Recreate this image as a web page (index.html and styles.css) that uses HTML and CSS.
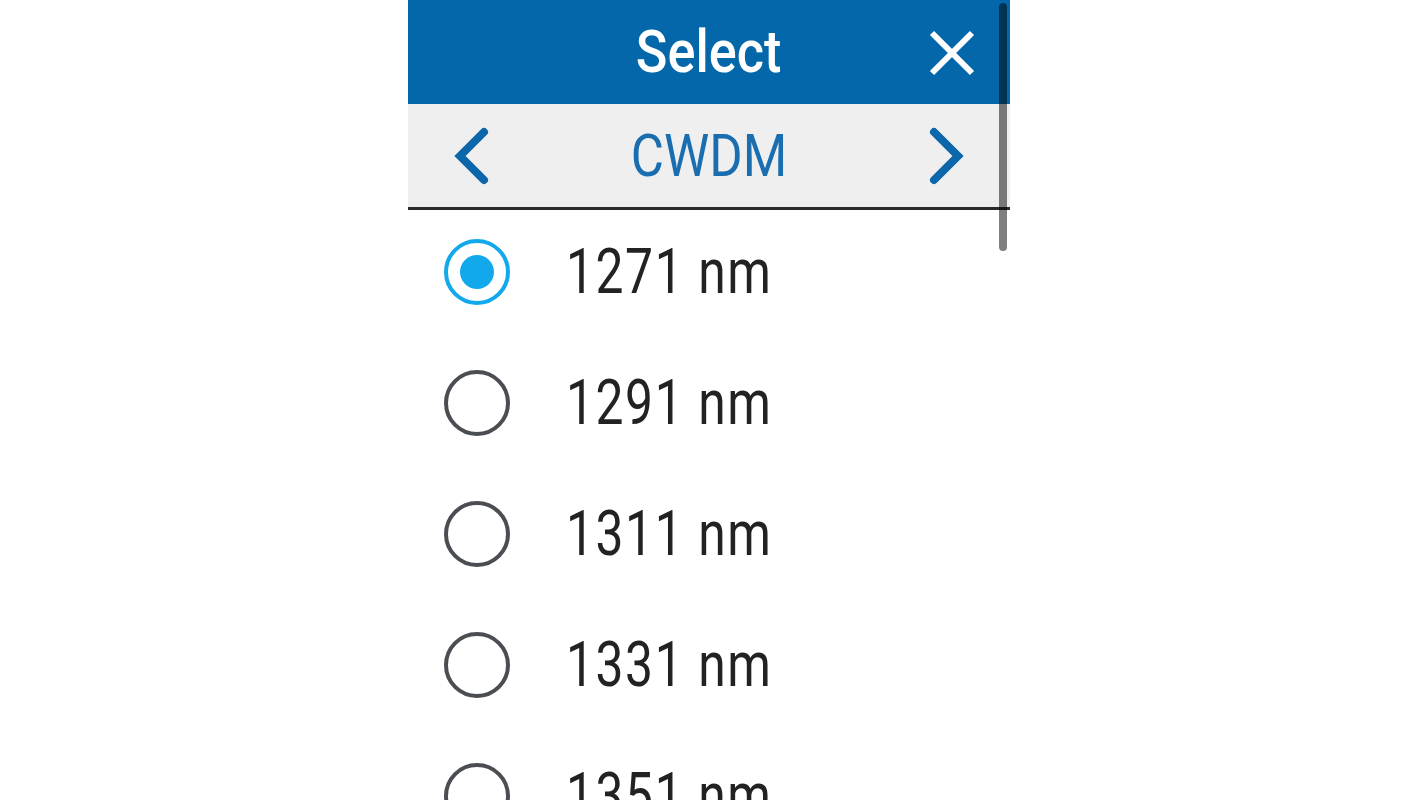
FILE: index.html
```html
<!DOCTYPE html>
<html lang="en">
<head>
<meta charset="utf-8">
<title>Select</title>
<link rel="stylesheet" href="styles.css">
</head>
<body>
<div class="panel">
  <header class="header">
    <span></span>
    <h1 class="title"><span class="squeeze">Select</span></h1>
    <button class="close" aria-label="Close">
      <svg width="48" height="48" viewBox="0 0 48 48"><path d="M4 4 L44 44 M44 4 L4 44" stroke="#fff" stroke-width="6" fill="none"/></svg>
    </button>
  </header>
  <nav class="nav">
    <button class="chev" aria-label="Previous">
      <svg width="38" height="58" viewBox="0 0 38 58"><path d="M32 5 L8 29 L32 53" stroke="#0b66aa" stroke-width="8" fill="none" stroke-linecap="round" stroke-linejoin="miter"/></svg>
    </button>
    <div class="group"><span class="squeeze">CWDM</span></div>
    <button class="chev" aria-label="Next">
      <svg width="38" height="58" viewBox="0 0 38 58"><path d="M6 5 L30 29 L6 53" stroke="#0b66aa" stroke-width="8" fill="none" stroke-linecap="round" stroke-linejoin="miter"/></svg>
    </button>
  </nav>
  <ul class="list">
    <li class="row"><span class="radio checked"></span><span class="label"><span class="squeeze">1271 nm</span></span></li>
    <li class="row"><span class="radio"></span><span class="label"><span class="squeeze">1291 nm</span></span></li>
    <li class="row"><span class="radio"></span><span class="label"><span class="squeeze">1311 nm</span></span></li>
    <li class="row"><span class="radio"></span><span class="label"><span class="squeeze">1331 nm</span></span></li>
    <li class="row"><span class="radio"></span><span class="label"><span class="squeeze">1351 nm</span></span></li>
  </ul>
  <div class="scrollbar"></div>
</div>
</body>
</html>
```
FILE: styles.css
```css
* { box-sizing: border-box; }
html, body { margin: 0; padding: 0; background: #fff; height: 800px; overflow: hidden; }
body { font-family: Roboto, "Noto Sans", sans-serif; }

.panel {
  position: relative;
  width: 602px;
  margin-left: 408px;
}

.header {
  height: 104px;
  background: #0467aa;
  display: grid;
  grid-template-columns: 1fr auto 1fr;
  align-items: center;
}
.title {
  margin: 0;
  color: #fff;
  font-size: 60px;
  font-weight: 500;
  line-height: 104px;
  text-align: center;
}
.title .squeeze { transform: scaleX(0.87); }
.close {
  justify-self: end;
  margin-right: 34px;
  background: none;
  border: 0;
  padding: 0;
  display: flex;
  margin-top: 2px;
}

.squeeze { display: inline-block; transform-origin: center; }

.nav {
  height: 106px;
  background: #efefef;
  border-bottom: 3px solid #2b2b2b;
  display: flex;
  align-items: center;
  justify-content: space-between;
  padding: 0 44px 0 44px;
}
.chev { background: none; border: 0; padding: 0; display: flex; }
.group {
  color: #1a6eb0;
  font-size: 60px;
  line-height: 1;
}
.group .squeeze { transform: scaleX(0.85); }

.list { list-style: none; margin: 0; padding: 0; }
.row {
  height: 131px;
  padding-top: 29px;
  padding-left: 36px;
  display: flex;
  align-items: flex-start;
}
.radio {
  width: 66px;
  height: 66px;
  border-radius: 50%;
  border: 4px solid #4a4d52;
  flex: none;
  display: flex;
  align-items: center;
  justify-content: center;
}
.radio.checked { border-color: #12a9ec; }
.radio.checked::after {
  content: "";
  width: 34px;
  height: 34px;
  border-radius: 50%;
  background: #12a9ec;
}
.label {
  margin-left: 56px;
  font-size: 63px;
  line-height: 66px;
  color: #222;
  white-space: nowrap;
}
.label .squeeze { transform: scaleX(0.79); transform-origin: left center; letter-spacing: 2px; }

.scrollbar {
  position: absolute;
  left: 591px;
  top: 3px;
  width: 8px;
  height: 248px;
  border-radius: 4px;
  background: rgba(0, 0, 0, 0.5);
}
```
